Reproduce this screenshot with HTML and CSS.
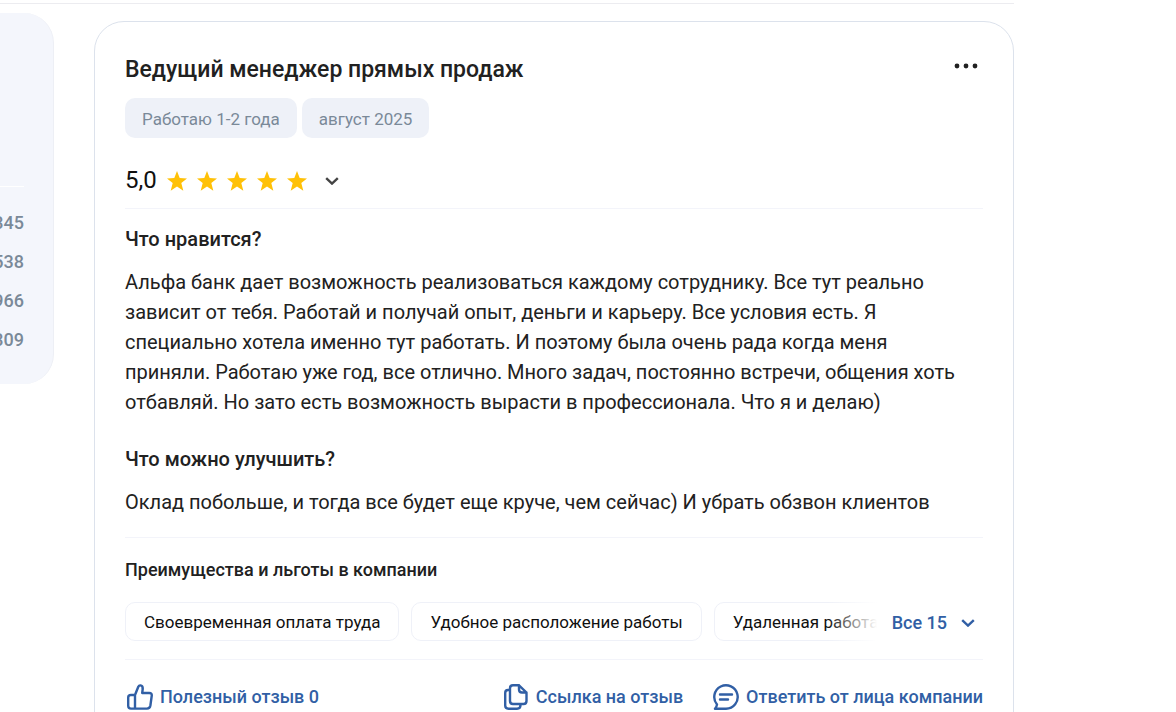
FILE: index.html
```html
<!DOCTYPE html>
<html lang="ru">
<head>
  <meta charset="UTF-8">
  <meta name="viewport" content="width=device-width, initial-scale=1.0">
  <title>Отзывы сотрудников</title>
  <link rel="stylesheet" href="styles.css">
</head>
<body>

<div class="page">
  <div class="top-line"></div>
  <div class="columns">
    <aside class="sidebar">
      <ul class="counts">
        <li>345</li>
        <li>538</li>
        <li>966</li>
        <li>309</li>
      </ul>
    </aside>

    <article class="review">
      <header class="review-header">
        <h2 class="review-title">Ведущий менеджер прямых продаж</h2>
        <button class="menu-button" aria-label="Меню">
          <svg width="24" height="6" viewBox="0 0 24 6" fill="#212121"><circle cx="3" cy="3" r="2.4"/><circle cx="12" cy="3" r="2.4"/><circle cx="21" cy="3" r="2.4"/></svg>
        </button>
      </header>

      <div class="tags">
        <span class="tag">Работаю 1-2 года</span>
        <span class="tag">август 2025</span>
      </div>

      <div class="rating">
        <span class="rating-value">5,0</span>
        <div class="stars">
          <svg class="star" viewBox="0 0 20 20"><path d="M10 0l2.7 7 7.3.4-5.7 4.6 2 7.8L10 15.6l-6.3 4.2 2-7.8L0 7.4 7.3 7z"/></svg>
          <svg class="star" viewBox="0 0 20 20"><path d="M10 0l2.7 7 7.3.4-5.7 4.6 2 7.8L10 15.6l-6.3 4.2 2-7.8L0 7.4 7.3 7z"/></svg>
          <svg class="star" viewBox="0 0 20 20"><path d="M10 0l2.7 7 7.3.4-5.7 4.6 2 7.8L10 15.6l-6.3 4.2 2-7.8L0 7.4 7.3 7z"/></svg>
          <svg class="star" viewBox="0 0 20 20"><path d="M10 0l2.7 7 7.3.4-5.7 4.6 2 7.8L10 15.6l-6.3 4.2 2-7.8L0 7.4 7.3 7z"/></svg>
          <svg class="star" viewBox="0 0 20 20"><path d="M10 0l2.7 7 7.3.4-5.7 4.6 2 7.8L10 15.6l-6.3 4.2 2-7.8L0 7.4 7.3 7z"/></svg>
        </div>
        <button class="rating-toggle" aria-label="Показать оценки">
          <svg class="chevron" viewBox="0 0 14 8"><path d="M1.2 1.2L7 6.6l5.8-5.4"/></svg>
        </button>
      </div>

      <section class="answers">
        <h3 class="question">Что нравится?</h3>
        <p class="answer">Альфа банк дает возможность реализоваться каждому сотруднику. Все тут реально зависит от тебя. Работай и получай опыт, деньги и карьеру. Все условия есть. Я специально хотела именно тут работать. И поэтому была очень рада когда меня приняли. Работаю уже год, все отлично. Много задач, постоянно встречи, общения хоть отбавляй. Но зато есть возможность вырасти в профессионала. Что я и делаю)</p>
        <h3 class="question">Что можно улучшить?</h3>
        <p class="answer">Оклад побольше, и тогда все будет еще круче, чем сейчас) И убрать обзвон клиентов</p>
      </section>

      <section class="benefits">
        <h4 class="benefits-title">Преимущества и льготы в компании</h4>
        <div class="benefits-row">
          <div class="benefits-list">
            <span class="benefit">Своевременная оплата труда</span>
            <span class="benefit">Удобное расположение работы</span>
            <span class="benefit">Удаленная работа</span>
          </div>
          <button class="all-button">
            Все 15
            <svg class="chevron" viewBox="0 0 14 8"><path d="M1.2 1.2L7 6.6l5.8-5.4"/></svg>
          </button>
        </div>
      </section>

      <footer class="actions">
        <button class="action action-like">
          <svg class="icon" viewBox="0 0 26 26"><path d="M8 11L11.3 2.7Q12 1.2 13.5 1.4Q16 1.9 15.7 5L15.2 9H22.3Q25.2 9 24.7 12L23.4 21.5Q22.9 24.6 20 24.6H4Q1.2 24.6 1.2 21.8V13.5Q1.2 11 4 11ZM8 11V24.6"/></svg>
          Полезный отзыв 0
        </button>
        <button class="action">
          <svg class="icon" viewBox="0 0 26 26"><path d="M7 6H5Q2.2 6 2.2 9V21.5Q2.2 24.7 5.5 24.7H14Q17.5 24.7 17.5 21V20M16 1.3H10Q7 1.3 7 4.3V17Q7 20 10 20H20.5Q23.5 20 23.5 17V8.5ZM16 1.3V5.5Q16 8.5 19 8.5H23.5"/></svg>
          Ссылка на отзыв
        </button>
        <button class="action">
          <svg class="icon" viewBox="0 0 26 26"><path d="M2 24.7H13A11.7 11.7 0 1 0 4 20.5Q3.8 22.5 2 24.7ZM7 10.5H19M7 15.5H15"/></svg>
          Ответить от лица компании
        </button>
      </footer>
    </article>
  </div>
</div>

</body>
</html>
```

FILE: styles.css
```css
* {
  box-sizing: border-box;
}

body {
  margin: 0;
  font-family: Roboto, 'Noto Sans', sans-serif;
  font-size: 20px;
  line-height: 30px;
  color: #212121;
  background-color: #fff;
}

h2, h3, h4, p, ul {
  margin: 0;
  padding: 0;
  font-weight: 500;
}

button {
  padding: 0;
  border: none;
  background: none;
  font: inherit;
  color: inherit;
  cursor: pointer;
}

svg {
  display: block;
  flex: none;
}

.page {
  height: 100vh;
  overflow: hidden;
  padding: 3px 162px 0 0;
}

.top-line {
  height: 1px;
  background-color: #ececf0;
}

.columns {
  display: grid;
  grid-template-columns: 54px 1fr;
  column-gap: 40px;
  align-items: start;
}

/* Left column, only its right edge is on screen */
.sidebar {
  margin-top: 9px;
  padding: 173px 29px 29px 0;
  border-right: 1px solid #edeff5;
  border-radius: 0 30px 30px 0;
  background-color: #f4f6fc;
}

.counts {
  display: flex;
  flex-direction: column;
  gap: 9px;
  padding-top: 21px;
  border-top: 1px solid #fff;
  list-style: none;
  font-size: 18px;
  font-weight: 500;
  color: #7a8998;
}

.counts li {
  display: flex;
  justify-content: flex-end;
}

.review {
  min-width: 0;
  margin-top: 17px;
  padding: 30px;
  border: 1px solid #dce2ec;
  border-radius: 30px;
}

.review-header {
  display: flex;
  justify-content: space-between;
  align-items: center;
  height: 34px;
}

.review-title {
  padding-top: 2px;
  font-size: 23px;
}

.menu-button {
  padding: 4px 5px 10px;
}

.tags {
  display: flex;
  gap: 5px;
  margin-top: 12px;
}

.tag {
  padding: 6px 17px 4px;
  border-radius: 10px;
  background-color: #eef1f8;
  font-size: 17px;
  color: #7a8998;
}

.rating {
  display: flex;
  align-items: center;
  padding: 27px 0 13px;
  border-bottom: 1px solid #f3f4fa;
}

.rating-value {
  font-size: 24px;
  color: #101010;
}

.stars {
  display: flex;
  gap: 10px;
  margin-left: 10px;
  padding-top: 2px;
}

.star {
  width: 20px;
  height: 20px;
  fill: #ffc107;
}

.chevron {
  width: 14px;
  height: 8px;
  fill: none;
  stroke: currentColor;
  stroke-width: 2.4;
}

.rating-toggle {
  margin-left: 18px;
  padding-top: 2px;
  color: #444;
}

.answers {
  padding: 15px 15px 21px 0;
  background: linear-gradient(#f3f4fa, #f3f4fa) bottom / 100% 1px no-repeat;
}

.question {
  margin-bottom: 13px;
  font-size: 20px;
}

.answer {
  font-weight: 400;
}

.answer + .question {
  margin-top: 27px;
}

.benefits {
  padding: 17px 0 18px;
  border-bottom: 1px solid #f3f4fa;
}

.benefits-title {
  font-size: 18px;
}

.benefits-row {
  display: flex;
  gap: 15px;
  margin-top: 17px;
}

.benefits-list {
  position: relative;
  display: flex;
  flex: 1;
  gap: 12px;
  min-width: 0;
  overflow: hidden;
}

/* Fade out the last benefit */
.benefits-list::after {
  content: '';
  position: absolute;
  top: 0;
  right: 0;
  bottom: 0;
  width: 50px;
  background: linear-gradient(to right, rgba(255, 255, 255, 0), #fff);
}

.benefit {
  flex: none;
  padding: 4px 18px 3px;
  border: 1px solid #eff1f8;
  border-radius: 10px;
  font-size: 17px;
  color: #101010;
  white-space: nowrap;
}

.all-button {
  display: flex;
  align-items: center;
  gap: 14px;
  padding: 2px 8px 0 0;
  font-size: 18px;
  font-weight: 500;
  color: #315fa5;
}

.actions {
  display: flex;
  gap: 30px;
  padding-top: 22px;
}

.action {
  display: flex;
  align-items: center;
  gap: 7px;
  font-size: 18px;
  font-weight: 500;
  color: #315fa5;
  white-space: nowrap;
}

.action-like {
  margin-right: auto;
  padding-left: 2px;
}

.icon {
  width: 26px;
  height: 26px;
  fill: none;
  stroke: currentColor;
  stroke-width: 2.4;
  stroke-linecap: round;
  stroke-linejoin: round;
}
```
